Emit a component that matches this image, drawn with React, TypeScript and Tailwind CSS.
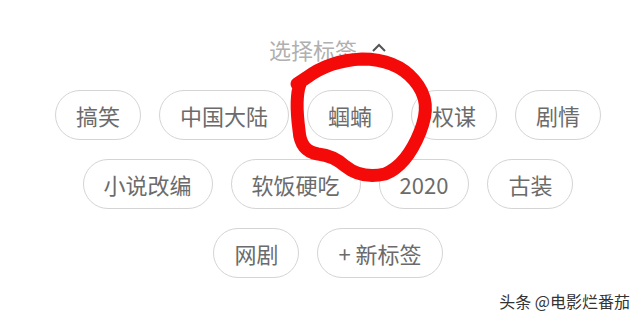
import React from "react";

const font = { fontFamily: '"Noto Sans CJK SC", "Noto Sans", sans-serif' };

function Pill({ label }: { label: string }) {
  return (
    <div className="h-[50px] flex items-center justify-center rounded-full border border-[#d4d4d4] px-[20px] text-[22px] leading-none text-[#6b6b6b] bg-white">
      {label}
    </div>
  );
}

export default function App() {
  const rows = [
    ["搞笑", "中国大陆", "蝈蝻", "权谋", "剧情"],
    ["小说改编", "软饭硬吃", "2020", "古装"],
    ["网剧", "+ 新标签"],
  ];
  return (
    <div
      className="relative w-[640px] h-[320px] overflow-hidden bg-white"
      style={font}
    >
      <div className="flex flex-col items-center pl-4 pt-[34px]">
        <div className="flex items-center gap-[14px] h-[30px] text-[22px] leading-none text-[#b0b0b0]">
          <span>选择标签</span>
          <svg width="16" height="10" viewBox="0 0 16 10" className="mb-[2px]">
            <path d="M2 8 L8 2 L14 8" fill="none" stroke="#555" strokeWidth="2" />
          </svg>
        </div>
        <div className="mt-[26px] flex flex-col items-center gap-y-[19px]">
          {rows.map((r, i) => (
            <div key={i} className="flex gap-x-[18px]">
              {r.map((t) => (
                <Pill key={t} label={t} />
              ))}
            </div>
          ))}
        </div>
      </div>

      <svg
        className="absolute left-0 top-0 pointer-events-none"
        width="640"
        height="320"
        viewBox="0 0 640 320"
      >
        <path
          d="M300 84 C 296 95, 297 115, 299 130 C 300 145, 306 152, 318 154 C 328 155, 336 158, 345 166 C 355 174, 368 178, 385 174 C 400 168, 412 152, 420 132 C 428 112, 428 96, 414 80 C 402 66, 385 59, 362 59 C 340 60, 322 66, 306 78 C 303 80, 300 82, 297 84"
          fill="none"
          stroke="#f50a0a"
          strokeWidth="13"
          strokeLinecap="round"
          strokeLinejoin="round"
        />
      </svg>

      <div
        className="absolute right-[10px] bottom-[11px] text-[16px] leading-none text-[#333]"
        style={{ textShadow: "1px 1px 0 #fff, -1px -1px 0 #fff, 1px -1px 0 #fff, -1px 1px 0 #fff" }}
      >
        头条 @电影烂番茄
      </div>
    </div>
  );
}
